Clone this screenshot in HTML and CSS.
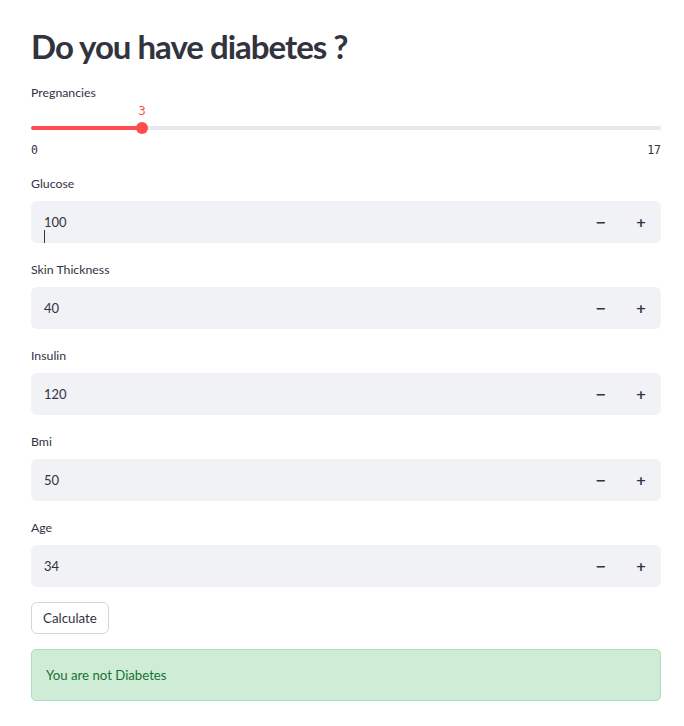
FILE: index.html
```html
<!DOCTYPE html>
<html>
<head>
<meta charset="utf-8">
<link rel="stylesheet" href="styles.css">
</head>
<body>
<main class="page">
  <h1 class="title">Do you have diabetes ?</h1>

  <div class="field slider-field">
    <label class="label">Pregnancies</label>
    <div class="slider">
      <div class="track">
        <div class="fill" style="width: 17.647%"></div>
        <div class="thumb" style="left: 17.647%"><span class="thumb-value">3</span></div>
      </div>
      <div class="ticks"><span>0</span><span>17</span></div>
    </div>
  </div>

  <div class="field">
    <label class="label">Glucose</label>
    <div class="number">
      <div class="number-input"><span class="val">100</span><span class="caret"></span></div>
      <button class="step">&minus;</button>
      <button class="step">+</button>
    </div>
  </div>

  <div class="field">
    <label class="label">Skin Thickness</label>
    <div class="number">
      <div class="number-input"><span class="val">40</span></div>
      <button class="step">&minus;</button>
      <button class="step">+</button>
    </div>
  </div>

  <div class="field">
    <label class="label">Insulin</label>
    <div class="number">
      <div class="number-input"><span class="val">120</span></div>
      <button class="step">&minus;</button>
      <button class="step">+</button>
    </div>
  </div>

  <div class="field">
    <label class="label">Bmi</label>
    <div class="number">
      <div class="number-input"><span class="val">50</span></div>
      <button class="step">&minus;</button>
      <button class="step">+</button>
    </div>
  </div>

  <div class="field">
    <label class="label">Age</label>
    <div class="number">
      <div class="number-input"><span class="val">34</span></div>
      <button class="step">&minus;</button>
      <button class="step">+</button>
    </div>
  </div>

  <button class="btn">Calculate</button>

  <div class="alert">You are not Diabetes</div>
</main>
</body>
</html>
```

FILE: styles.css
```css
* { box-sizing: border-box; }
html, body { margin: 0; padding: 0; background: #fff; }
body {
  font-family: Lato, "Open Sans", sans-serif;
  color: #31333f;
}
.page {
  width: 684px;
  padding: 20px 23px 24px 31px;
  display: flex;
  flex-direction: column;
}
.title {
  margin: 0;
  font-size: 33px;
  font-weight: 700;
  line-height: 52px;
  letter-spacing: -1px;
  color: #31333f;
}
.field { display: flex; flex-direction: column; }
.label {
  font-size: 12.3px;
  line-height: 18px;
  color: #31333f;
}
.slider-field { margin-top: 12px; }
.slider { padding-top: 24px; }
.track {
  position: relative;
  height: 4px;
  background: #e6e8ed;
  border-radius: 2px;
}
.fill {
  height: 4px;
  background: #ff4b4b;
  border-radius: 2px;
}
.thumb {
  position: absolute;
  top: -4px;
  width: 12px;
  height: 12px;
  margin-left: -6px;
  border-radius: 50%;
  background: #ff4b4b;
}
.thumb-value {
  position: absolute;
  top: -18px;
  left: 50%;
  transform: translateX(-50%);
  font-family: "DejaVu Sans Mono", monospace;
  font-size: 12px;
  color: #ff4b4b;
}
.ticks {
  display: flex;
  justify-content: space-between;
  margin-top: 12px;
  font-family: "DejaVu Sans Mono", monospace;
  font-size: 11.5px;
  line-height: 16px;
  color: #31333f;
}
.field + .field { margin-top: 18px; }
.slider-field + .field { margin-top: 17px; }
.number {
  margin-top: 8px;
  display: flex;
  height: 42px;
  background: #f0f2f6;
  border-radius: 6px;
}
.number-input {
  position: relative;
  flex: 1;
  padding-left: 13px;
  display: flex;
  align-items: center;
  font-size: 13px;
  color: #31333f;
}
.caret {
  position: absolute;
  left: 13px;
  top: 29px;
  width: 1px;
  height: 13px;
  background: #31333f;
}
.step {
  width: 40px;
  border: 0;
  background: transparent;
  font-family: "DejaVu Sans", sans-serif;
  font-weight: 700;
  font-size: 13px;
  color: #31333f;
  padding: 0;
}
.btn {
  align-self: flex-start;
  margin-top: 15px;
  height: 32px;
  padding: 0 11px;
  background: #fff;
  border: 1px solid #d6d6d9;
  border-radius: 6px;
  font-family: Lato, "Open Sans", sans-serif;
  font-size: 13.3px;
  color: #31333f;
}
.alert {
  margin-top: 15px;
  height: 52px;
  padding: 0 14px;
  display: flex;
  align-items: center;
  background: #cfecd6;
  border: 1px solid #a9dfb8;
  border-radius: 5px;
  font-size: 13.2px;
  color: #177233;
}
```
